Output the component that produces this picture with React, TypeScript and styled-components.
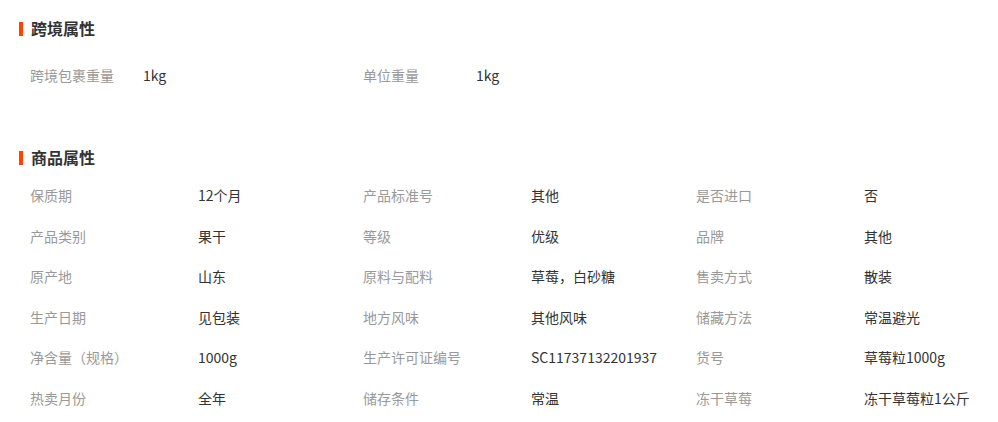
import styled, { createGlobalStyle } from 'styled-components'

type Attr = { label: string; value: string }

const crossBorder: Attr[] = [
	{ label: '跨境包裹重量', value: '1kg' },
	{ label: '单位重量', value: '1kg' },
]

const product: Attr[] = [
	{ label: '保质期', value: '12个月' },
	{ label: '产品标准号', value: '其他' },
	{ label: '是否进口', value: '否' },
	{ label: '产品类别', value: '果干' },
	{ label: '等级', value: '优级' },
	{ label: '品牌', value: '其他' },
	{ label: '原产地', value: '山东' },
	{ label: '原料与配料', value: '草莓，白砂糖' },
	{ label: '售卖方式', value: '散装' },
	{ label: '生产日期', value: '见包装' },
	{ label: '地方风味', value: '其他风味' },
	{ label: '储藏方法', value: '常温避光' },
	{ label: '净含量（规格）', value: '1000g' },
	{ label: '生产许可证编号', value: 'SC11737132201937' },
	{ label: '货号', value: '草莓粒1000g' },
	{ label: '热卖月份', value: '全年' },
	{ label: '储存条件', value: '常温' },
	{ label: '冻干草莓', value: '冻干草莓粒1公斤' },
]

export default function App() {
	return <>
		<GlobalStyle />
		<Page>
			<Title>跨境属性</Title>
			<CrossGrid>
				{crossBorder.map(a => <Pair key={a.label}>
					<Label $width={113}>{a.label}</Label>
					<Value>{a.value}</Value>
				</Pair>)}
			</CrossGrid>

			<Title $top={53}>商品属性</Title>
			<ProductGrid>
				{product.map(a => <Pair key={a.label}>
					<Label $width={168}>{a.label}</Label>
					<Value>{a.value}</Value>
				</Pair>)}
			</ProductGrid>
		</Page>
	</>
}

const GlobalStyle = createGlobalStyle`
	body {
		margin: 0;
		background: #fff;
		font-family: "Noto Sans CJK SC", "Noto Sans", sans-serif;
		font-size: 14px;
	}
`

const Page = styled.div`
	width: 998px;
	padding: 19px 19px 0;
	box-sizing: border-box;
`

const Title = styled.div<{ $top?: number }>`
	display: flex;
	align-items: center;
	gap: 8px;
	height: 18px;
	margin-top: ${props => props.$top || 0}px;
	font-size: 16px;
	font-weight: 700;
	color: #333;

	&::before {
		content: '';
		width: 4px;
		height: 14px;
		margin-top: 2px;
		background: #ff4400;
	}
`

const CrossGrid = styled.div`
	display: grid;
	grid-template-columns: repeat(3, 333px);
	margin-top: 18px;
	padding-left: 11px;
`

const ProductGrid = styled.div`
	display: grid;
	grid-template-columns: repeat(3, 333px);
	grid-auto-rows: 40.6px;
	margin-top: 9px;
	padding-left: 11px;
`

const Pair = styled.div`
	display: flex;
	align-items: center;
	height: 40px;
`

const Label = styled.div<{ $width: number }>`
	width: ${props => props.$width}px;
	flex-shrink: 0;
	color: #999;
	white-space: nowrap;
`

const Value = styled.div`
	color: #333;
	white-space: nowrap;
`
